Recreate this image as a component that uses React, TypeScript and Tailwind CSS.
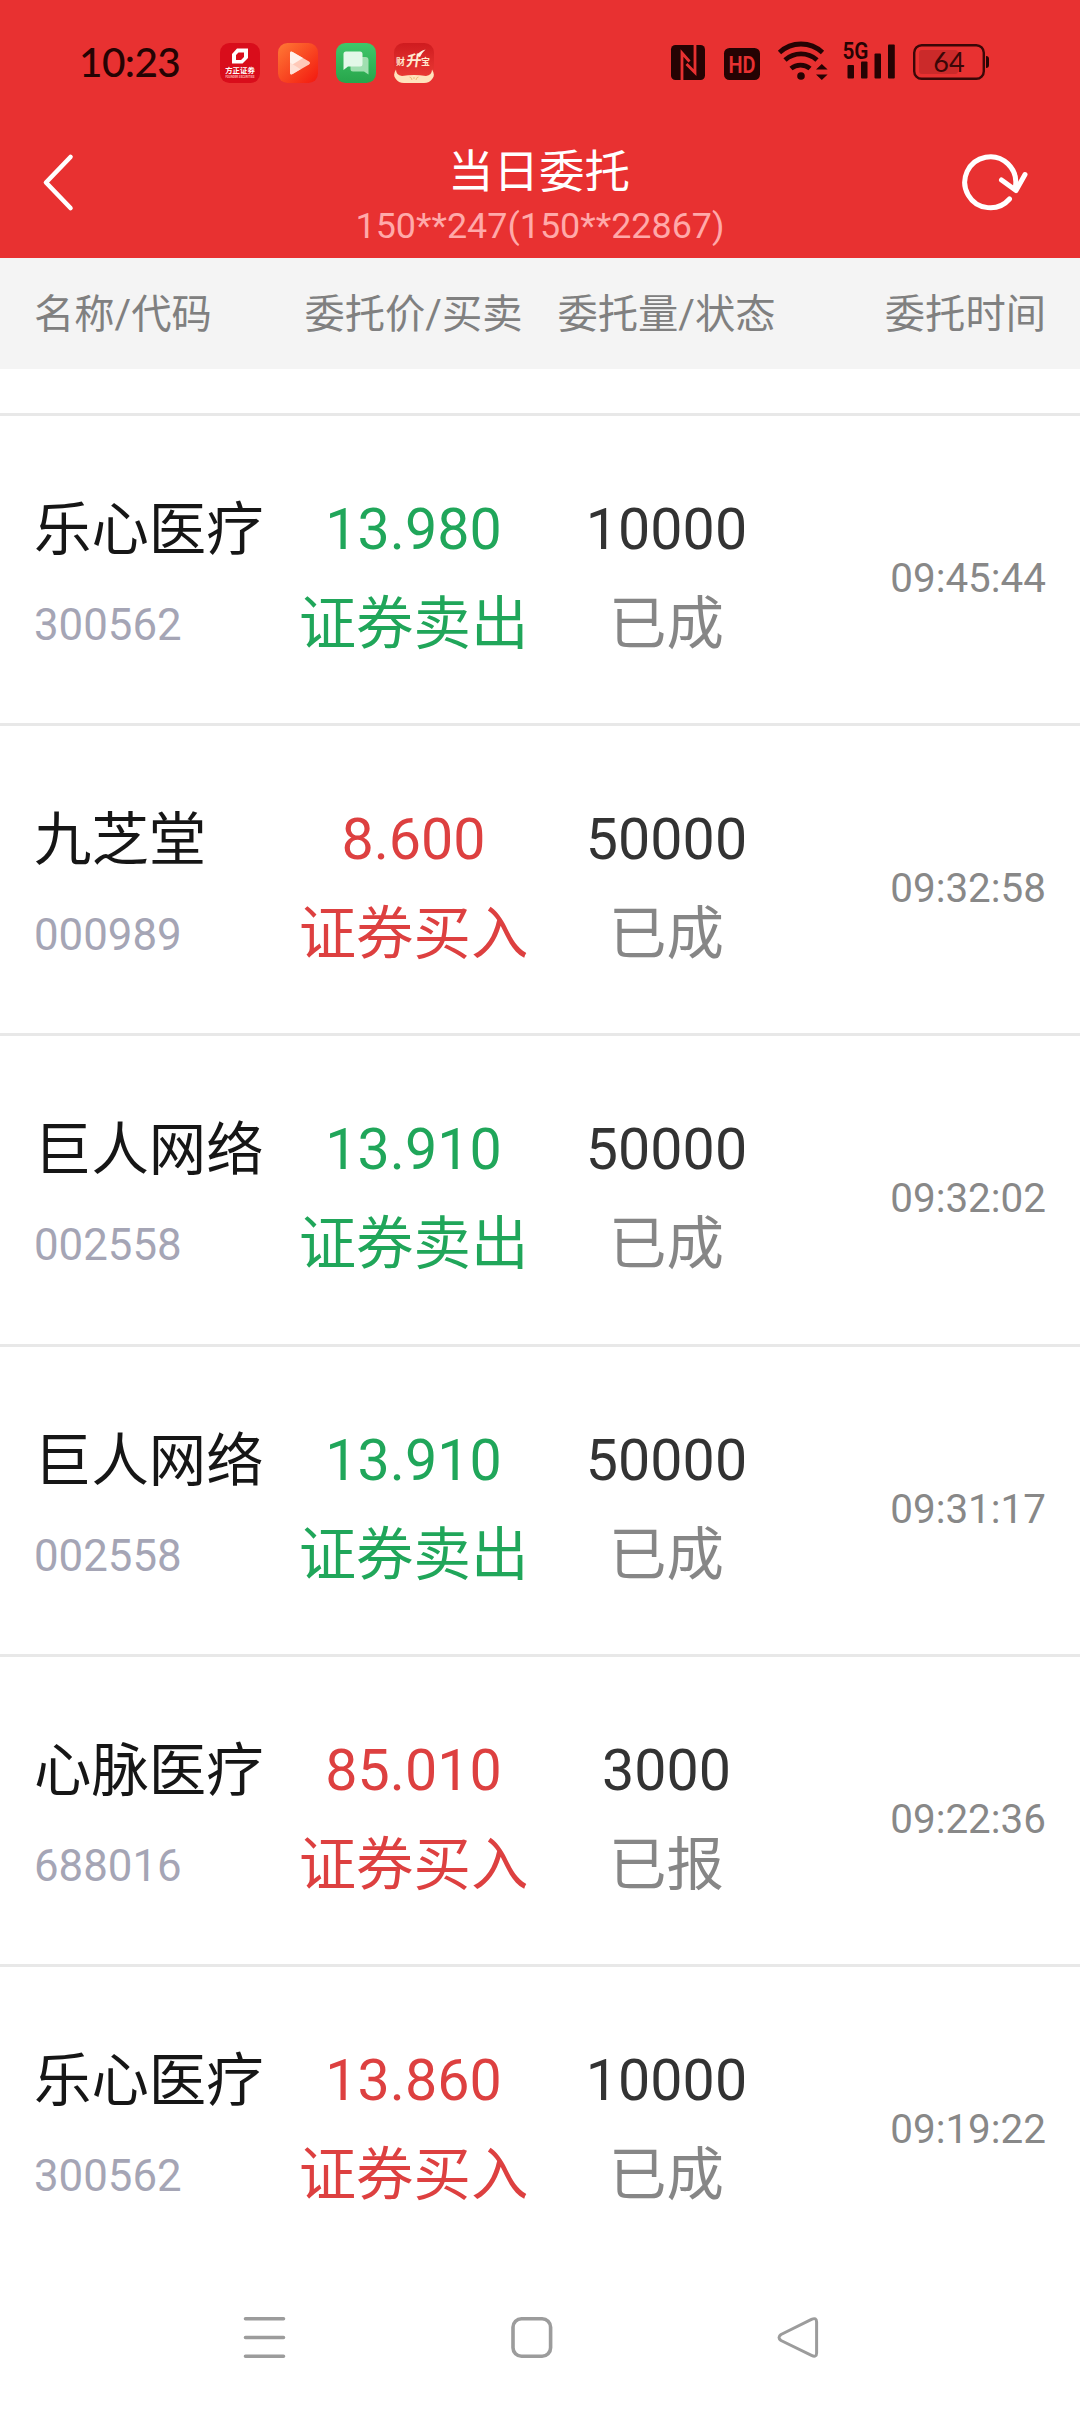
import React from "react";

type Order = {
  name: string;
  code: string;
  price: string;
  side: "buy" | "sell";
  amount: string;
  status: string;
  time: string;
};

const orders: Order[] = [
  { name: "乐心医疗", code: "300562", price: "13.980", side: "sell", amount: "10000", status: "已成", time: "09:45:44" },
  { name: "九芝堂", code: "000989", price: "8.600", side: "buy", amount: "50000", status: "已成", time: "09:32:58" },
  { name: "巨人网络", code: "002558", price: "13.910", side: "sell", amount: "50000", status: "已成", time: "09:32:02" },
  { name: "巨人网络", code: "002558", price: "13.910", side: "sell", amount: "50000", status: "已成", time: "09:31:17" },
  { name: "心脉医疗", code: "688016", price: "85.010", side: "buy", amount: "3000", status: "已报", time: "09:22:36" },
  { name: "乐心医疗", code: "300562", price: "13.860", side: "buy", amount: "10000", status: "已成", time: "09:19:22" },
];

export default function App() {
  return (
    <div className="flex h-[2412px] w-[1080px] flex-col overflow-hidden bg-white font-['Roboto','Noto_Sans_CJK_SC',sans-serif]">
      <header className="h-[258px] shrink-0 bg-[#e83131]">
        <StatusBar />
        <TitleBar />
      </header>
      <div className="grid h-[111px] shrink-0 grid-cols-4 items-center bg-[#f4f4f4] px-[34px] pt-[3px] text-[40.3px] leading-none whitespace-nowrap text-[#808080]">
        <span>名称/代码</span>
        <span className="text-center">委托价/买卖</span>
        <span className="text-center">委托量/状态</span>
        <span className="text-right">委托时间</span>
      </div>
      <main className="flex-1 pt-11">
        {orders.map((order) => (
          <OrderRow key={order.time} order={order} />
        ))}
      </main>
      <NavBar />
    </div>
  );
}

const OrderRow = ({ order }: { order: Order }) => {
  const sideColor = order.side === "buy" ? "text-[#dd4040]" : "text-[#20a65a]";
  return (
    <div className="grid h-[310.2px] grid-cols-4 border-t-[3px] border-[#e8e8e8] px-[34px] pt-[66px] text-[57.4px] leading-[95px] whitespace-nowrap">
      <div className="pt-px">
        <p className="text-[#161616]">{order.name}</p>
        <p className="text-[43.8px] text-[#a5a5b5]">{order.code}</p>
      </div>
      <div className={"flex flex-col items-center " + sideColor}>
        <p>{order.price}</p>
        <p>{order.side === "buy" ? "证券买入" : "证券卖出"}</p>
      </div>
      <div className="flex flex-col items-center">
        <p className="text-[#333333]">{order.amount}</p>
        <p className="text-[#868686]">{order.status}</p>
      </div>
      <p className="pt-[49px] text-right text-[40.4px] text-[#888888]">{order.time}</p>
    </div>
  );
};

const TitleBar = () => (
  <div className="flex h-[134px] items-start justify-between pr-[50px] pl-[40px]">
    <svg className="mt-[24px]" width="68" height="68" viewBox="0 0 68 68" fill="none" stroke="#fff" strokeWidth="4.6" strokeLinecap="round" strokeLinejoin="round">
      <path d="M30.5 9 6 34.5 30.5 60" />
    </svg>
    <div className="ml-[10px] flex flex-col items-center pt-[19px]">
      <h1 className="-ml-0.5 text-[45.5px] leading-[60px] text-white">当日委托</h1>
      <p className="-mt-0.5 text-[35.9px] leading-[50px] text-[#ffa9a9]">150**247(150**22867)</p>
    </div>
    {/* refresh */}
    <svg className="mt-[24px]" width="68" height="68" viewBox="0 0 68 68" fill="none" stroke="#fff" strokeWidth="5" strokeLinecap="round" strokeLinejoin="round">
      <path d="M47.5 51A25.5 25.5 0 1 1 53.5 38" />
      <path d="M39.5 32 54 42.5 63 26.5" />
    </svg>
  </div>
);

const StatusBar = () => (
  <div className="flex h-[124px] items-center justify-between pr-[90px] pl-[79px]">
    <div className="flex items-center">
      <span className="w-[141px] font-['Lato'] text-[40.5px] leading-none font-medium tracking-[-0.6px] text-[#250303]">10:23</span>
      <AppIcons />
    </div>
    <SignalIcons />
  </div>
);

const AppIcons = () => (
  <div className="flex gap-[18px] pt-px">
    {/* 方正证券 */}
    <svg width="40" height="40" viewBox="0 0 40 40">
      <rect width="40" height="40" rx="9.5" fill="#d90d1b" />
      <path fillRule="evenodd" fill="#fff" d="M17 5.5H28V15L22.5 20.5H12V11ZM18.5 9.5 16 12V17H21L24 14V9.5Z" />
      <text x="20" y="30" textAnchor="middle" fontSize="7.4" fontWeight="700" fill="#fff" fontFamily="Noto Sans CJK SC">方正证券</text>
      <text x="20" y="35.4" textAnchor="middle" fontSize="2.8" fontWeight="700" fill="#ffb4b4" textLength="29">FOUNDER SECURITIES</text>
    </svg>
    {/* video */}
    <svg width="40" height="40" viewBox="0 0 40 40">
      <defs>
        <linearGradient id="video" x1="0" y1="0" x2="1" y2="1">
          <stop offset="0" stopColor="#ff7a35" />
          <stop offset="1" stopColor="#f3170f" />
        </linearGradient>
      </defs>
      <rect width="40" height="40" rx="9.5" fill="url(#video)" />
      <path d="M12 10.5Q12 7.5 14.6 9L31 18.5Q33 20 31 21.5L14.6 31Q12 32.3 12 29.5Z" fill="#ffc9b8" />
      <path d="M12 10.5Q12 7.5 14.6 9L25 15 12 23Z" fill="#fff1ea" />
      <path d="M12 19.5 22.5 26.3 14.6 31Q12 32.3 12 29.5Z" fill="#ffe0d5" />
    </svg>
    {/* messages */}
    <svg width="40" height="40" viewBox="0 0 40 40">
      <defs>
        <linearGradient id="chat" x1="0" y1="0" x2="0" y2="1">
          <stop offset="0" stopColor="#3fc76a" />
          <stop offset="1" stopColor="#27a54b" />
        </linearGradient>
      </defs>
      <rect width="40" height="40" rx="9.5" fill="url(#chat)" />
      <path d="M17 14H29.5Q32.5 14 32.5 17V31.5L28 28.5H17Q14.5 28.5 14.5 26V16.5Q14.5 14 17 14Z" fill="#a0dfb0" />
      <path d="M10 8.5H24Q26.5 8.5 26.5 11V21Q26.5 23.5 24 23.5H12L7.5 27V11Q7.5 8.5 10 8.5Z" fill="#e3f8e8" />
    </svg>
    {/* 财升宝 */}
    <svg width="40" height="40" viewBox="0 0 40 40">
      <defs>
        <linearGradient id="bull" x1="0" y1="0" x2="0" y2="1">
          <stop offset="0" stopColor="#cf1b1f" />
          <stop offset="1" stopColor="#ee3f38" />
        </linearGradient>
      </defs>
      <rect width="40" height="40" rx="9.5" fill="url(#bull)" />
      <g fill="#ffe9cf" fontFamily="Noto Sans CJK SC" fontWeight="700">
        <text x="2" y="22" fontSize="9">财</text>
        <text x="12" y="23" fontSize="15" transform="skewX(-8) translate(3 0)">升</text>
        <text x="27" y="22" fontSize="9">宝</text>
      </g>
      <path d="M22.5 13Q25 8 31.5 6.5 28 9.5 26 14Z" fill="#fff3e2" />
      <path d="M2 26.5Q-1.5 32 1.5 35.5 4.5 40 10 40H30Q35.500 40 38.5 35.5 41.500 32 38 26.5 38 32 32 33 20 31 8 33 2 32 2 26.5Z" fill="#ffe3bd" />
      <path d="M15.5 34Q17.5 34 18 37M24.5 34Q22.5 34 22 37M19 35H21" stroke="#eebb7c" strokeWidth="1" fill="none" />
    </svg>
  </div>
);

const SignalIcons = () => (
  <svg className="overflow-visible" width="320" height="60" viewBox="670 32 320 60" fill="#250303">
    {/* NFC */}
    <rect x="671" y="45" width="34" height="35" rx="4.5" />
    <path d="M682 80V53L689.5 61.5M695 45V72.5L686.5 64" stroke="#e83131" strokeWidth="2.8" fill="none" />
    {/* HD */}
    <rect x="724" y="48" width="36" height="32" rx="5.5" />
    <text x="742" y="72.500" textAnchor="middle" fontFamily="Roboto" fontSize="24.5" fontWeight="600" fill="#e83131" textLength="27" lengthAdjust="spacingAndGlyphs">HD</text>
    {/* Wi-Fi */}
    <g fill="none" stroke="#250303" strokeWidth="4.8">
      <path d="M779.5 52.5A31.5 31.5 0 0 1 822.5 52.5" />
      <path d="M785 60A24 24 0 0 1 817 60" />
      <path d="M791 68.5A15 15 0 0 1 810 68.5" />
    </g>
    <circle cx="801" cy="76" r="3.8" />
    <path d="M816 69.5 821.8 64 827.6 69.5ZM816 74.5H827.6L821.8 80Z" />
    {/* 5G bars */}
    <text x="842.5" y="59" fontFamily="Roboto" fontSize="23.5" fontWeight="600" textLength="26" lengthAdjust="spacingAndGlyphs">5G</text>
    <rect x="847.5" y="65" width="6.5" height="13.5" rx="1" />
    <rect x="861" y="61.5" width="6.5" height="17" rx="1" />
    <rect x="874.5" y="53.5" width="6.5" height="25" rx="1" />
    <rect x="888" y="44.5" width="6.8" height="34" rx="1" />
    {/* battery */}
    <rect x="919" y="50" width="39" height="24" rx="3" fill="#cb2a2a" />
    <rect x="914.2" y="45.2" width="69.6" height="33.6" rx="7.5" fill="none" stroke="#3a0707" strokeWidth="2.4" />
    <path d="M986 56Q989 56 989 59V65Q989 68 986 68Z" />
    <text x="949" y="72.3" textAnchor="middle" fontFamily="Lato" fontSize="27" fill="#3a0707">64</text>
  </svg>
);

const NavBar = () => (
  <nav className="flex h-[138px] shrink-0 items-center justify-between pr-[261px] pb-[11px] pl-[243px]">
    <svg width="43" height="43" viewBox="0 0 43 43" stroke="#9c9c9c" strokeWidth="3.6" strokeLinecap="round">
      <path d="M2.5 2.7H40.5M2.5 21.5H40.5M2.5 40.2H40.5" />
    </svg>
    <svg width="43" height="43" viewBox="0 0 43 43" fill="none" stroke="#9c9c9c" strokeWidth="3.6">
      <rect x="3" y="2.7" width="37.6" height="37.6" rx="8.5" />
    </svg>
    <svg width="43" height="43" viewBox="0 0 43 43" fill="none" stroke="#9c9c9c" strokeWidth="3">
      <path d="M35.5 3.4Q40.6 1 40.6 6V37Q40.6 41.8 35.5 39.4L5 24.5Q1 21.5 5 18.5Z" strokeLinejoin="round" />
    </svg>
  </nav>
);
